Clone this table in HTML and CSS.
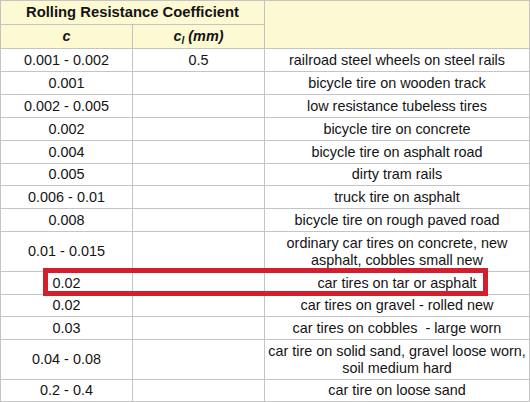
FILE: index.html
```html
<!DOCTYPE html>
<html>
<head>
<meta charset="utf-8">
<link rel="stylesheet" href="styles.css">
</head>
<body>
<div class="wrap">
  <div class="grid">
    <div class="cell head title">Rolling Resistance Coefficient</div>
    <div class="cell head blank">&nbsp;</div>
    <div class="cell head sub"><i>c</i></div>
    <div class="cell head sub"><i>c<sub>l</sub> (mm)</i></div>

    <div class="cell">0.001 - 0.002</div><div class="cell">0.5</div><div class="cell">railroad steel wheels on steel rails</div>
    <div class="cell">0.001</div><div class="cell"></div><div class="cell">bicycle tire on wooden track</div>
    <div class="cell">0.002 - 0.005</div><div class="cell"></div><div class="cell">low resistance tubeless tires</div>
    <div class="cell">0.002</div><div class="cell"></div><div class="cell">bicycle tire on concrete</div>
    <div class="cell">0.004</div><div class="cell"></div><div class="cell">bicycle tire on asphalt road</div>
    <div class="cell">0.005</div><div class="cell"></div><div class="cell">dirty tram rails</div>
    <div class="cell">0.006 - 0.01</div><div class="cell"></div><div class="cell">truck tire on asphalt</div>
    <div class="cell">0.008</div><div class="cell"></div><div class="cell">bicycle tire on rough paved road</div>
    <div class="cell">0.01 - 0.015</div><div class="cell"></div><div class="cell">ordinary car tires on concrete, new asphalt, cobbles small new</div>
    <div class="cell">0.02</div><div class="cell"></div><div class="cell">car tires on tar or asphalt</div>
    <div class="cell">0.02</div><div class="cell"></div><div class="cell">car tires on gravel - rolled new</div>
    <div class="cell">0.03</div><div class="cell"></div><div class="cell">car tires on cobbles&nbsp; - large worn</div>
    <div class="cell">0.04 - 0.08</div><div class="cell"></div><div class="cell">car tire on solid sand, gravel loose worn, soil medium hard</div>
    <div class="cell">0.2 - 0.4</div><div class="cell"></div><div class="cell">car tire on loose sand</div>
  </div>
  <div class="highlight"></div>
</div>
</body>
</html>
```
FILE: styles.css
```css
html, body {
  margin: 0;
  padding: 0;
  background: #ffffff;
}
.wrap {
  position: relative;
  width: 530px;
  height: 402px;
}
.grid {
  display: grid;
  grid-template-columns: 131px 131px 264px;
  grid-template-rows: 23px 23px 22px 22px 22px 22px 22px 21px 22px 22px 39px 22px 21px 22px 39px 21px;
  gap: 1px;
  padding: 1px;
  background: #c4c4c4;
  width: 528px;
  font-family: "Liberation Sans", Arial, sans-serif;
  font-size: 14.4px;
  color: #141414;
}
.cell {
  background: #ffffff;
  display: flex;
  align-items: center;
  justify-content: center;
  text-align: center;
  line-height: 17px;
  padding: 0 2px;
}
.head {
  background: #fcf9d3;
  font-weight: bold;
}
.title {
  grid-column: 1 / 3;
  grid-row: 1;
  font-size: 14.8px;
}
.blank {
  grid-column: 3;
  grid-row: 1 / 3;
}
.sub sub {
  font-size: 10px;
  vertical-align: -3px;
  line-height: 0;
}
.highlight {
  position: absolute;
  left: 43px;
  top: 268px;
  width: 435px;
  height: 18px;
  border: 5px solid #d21f2d;
}
```
